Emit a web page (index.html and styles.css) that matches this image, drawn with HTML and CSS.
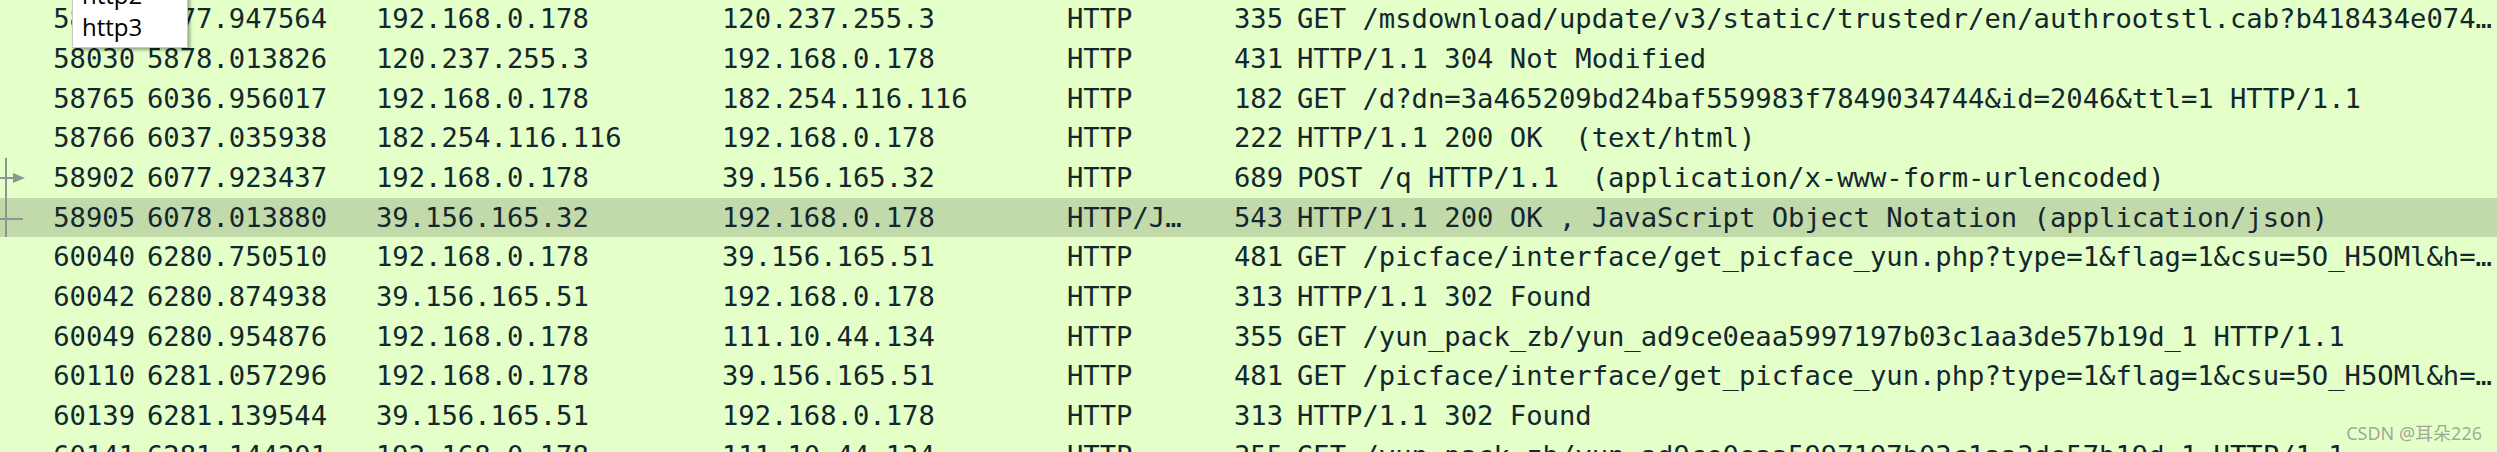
FILE: index.html
```html
<!DOCTYPE html>
<html>
<head>
<meta charset="utf-8">
<link rel="stylesheet" href="styles.css">
</head>
<body>
<div class="list">
  <div class="row"><span class="c no">58028</span><span class="c">5877.947564</span><span class="c">192.168.0.178</span><span class="c">120.237.255.3</span><span class="c">HTTP</span><span class="c len">335</span><span class="c info">GET /msdownload/update/v3/static/trustedr/en/authrootstl.cab?b418434e074…</span></div>
  <div class="row"><span class="c no">58030</span><span class="c">5878.013826</span><span class="c">120.237.255.3</span><span class="c">192.168.0.178</span><span class="c">HTTP</span><span class="c len">431</span><span class="c info">HTTP/1.1 304 Not Modified</span></div>
  <div class="row"><span class="c no">58765</span><span class="c">6036.956017</span><span class="c">192.168.0.178</span><span class="c">182.254.116.116</span><span class="c">HTTP</span><span class="c len">182</span><span class="c info">GET /d?dn=3a465209bd24baf559983f7849034744&amp;id=2046&amp;ttl=1 HTTP/1.1</span></div>
  <div class="row"><span class="c no">58766</span><span class="c">6037.035938</span><span class="c">182.254.116.116</span><span class="c">192.168.0.178</span><span class="c">HTTP</span><span class="c len">222</span><span class="c info">HTTP/1.1 200 OK  (text/html)</span></div>
  <div class="row"><span class="c no"><svg class="mark" width="30" height="40" viewBox="0 0 30 40"><path d="M6 0V40M0 20H14" stroke="#8f9494" stroke-width="2" fill="none"/><path d="M13 15L25 20L13 25Z" fill="#8f9494"/></svg>58902</span><span class="c">6077.923437</span><span class="c">192.168.0.178</span><span class="c">39.156.165.32</span><span class="c">HTTP</span><span class="c len">689</span><span class="c info">POST /q HTTP/1.1  (application/x-www-form-urlencoded)</span></div>
  <div class="row sel"><span class="c no"><svg class="mark" width="30" height="40" viewBox="0 0 30 40"><path d="M6 0V40M0 21H23" stroke="#8f9494" stroke-width="2" fill="none"/></svg>58905</span><span class="c">6078.013880</span><span class="c">39.156.165.32</span><span class="c">192.168.0.178</span><span class="c">HTTP/J…</span><span class="c len">543</span><span class="c info">HTTP/1.1 200 OK , JavaScript Object Notation (application/json)</span></div>
  <div class="row"><span class="c no">60040</span><span class="c">6280.750510</span><span class="c">192.168.0.178</span><span class="c">39.156.165.51</span><span class="c">HTTP</span><span class="c len">481</span><span class="c info">GET /picface/interface/get_picface_yun.php?type=1&amp;flag=1&amp;csu=5O_H5OMl&amp;h=…</span></div>
  <div class="row"><span class="c no">60042</span><span class="c">6280.874938</span><span class="c">39.156.165.51</span><span class="c">192.168.0.178</span><span class="c">HTTP</span><span class="c len">313</span><span class="c info">HTTP/1.1 302 Found</span></div>
  <div class="row"><span class="c no">60049</span><span class="c">6280.954876</span><span class="c">192.168.0.178</span><span class="c">111.10.44.134</span><span class="c">HTTP</span><span class="c len">355</span><span class="c info">GET /yun_pack_zb/yun_ad9ce0eaa5997197b03c1aa3de57b19d_1 HTTP/1.1</span></div>
  <div class="row"><span class="c no">60110</span><span class="c">6281.057296</span><span class="c">192.168.0.178</span><span class="c">39.156.165.51</span><span class="c">HTTP</span><span class="c len">481</span><span class="c info">GET /picface/interface/get_picface_yun.php?type=1&amp;flag=1&amp;csu=5O_H5OMl&amp;h=…</span></div>
  <div class="row"><span class="c no">60139</span><span class="c">6281.139544</span><span class="c">39.156.165.51</span><span class="c">192.168.0.178</span><span class="c">HTTP</span><span class="c len">313</span><span class="c info">HTTP/1.1 302 Found</span></div>
  <div class="row"><span class="c no">60141</span><span class="c">6281.144201</span><span class="c">192.168.0.178</span><span class="c">111.10.44.134</span><span class="c">HTTP</span><span class="c len">355</span><span class="c info">GET /yun_pack_zb/yun_ad9ce0eaa5997197b03c1aa3de57b19d_1 HTTP/1.1</span></div>
</div>
<div class="menu">
  <div class="item">http2</div>
  <div class="item">http3</div>
</div>
<div class="watermark">CSDN @耳朵226</div>
</body>
</html>
```
FILE: styles.css
```css
html, body {
  margin: 0;
  padding: 0;
  background: #e4ffc7;
  overflow: hidden;
}
body {
  width: 2497px;
  height: 452px;
  position: relative;
}
.list {
  margin-top: -0.8px;
  font-family: "DejaVu Sans Mono", monospace;
  font-size: 27.2px;
  color: #12272e;
}
.row {
  display: grid;
  grid-template-columns: 141px 229px 346px 345px 129px 99px 1fr;
  height: 39.7px;
  line-height: 39.7px;
  background: #e4ffc7;
  white-space: pre;
}
.row.sel {
  background: #c2d9aa;
}
.c {
  padding: 0 6px;
  overflow: hidden;
  position: relative;
}
.no, .len {
  text-align: right;
}
.info {
  padding-left: 8px;
}
.mark {
  position: absolute;
  left: 0;
  top: 0;
}
.menu {
  position: absolute;
  left: 72px;
  top: -26px;
  width: 114px;
  background: #fff;
  border: 1px solid #c8c8c8;
  padding: 4px 0;
  box-shadow: 2px 2px 3px rgba(0, 0, 0, 0.35);
  font-family: "Open Sans", sans-serif;
  font-size: 24px;
  color: #000;
}
.item {
  height: 32px;
  line-height: 32px;
  padding-left: 9px;
}
.watermark {
  position: absolute;
  right: 15px;
  bottom: 7px;
  font-family: "Noto Sans", "Noto Sans CJK SC", sans-serif;
  font-size: 18px;
  color: rgba(130, 130, 130, 0.7);
}
```
